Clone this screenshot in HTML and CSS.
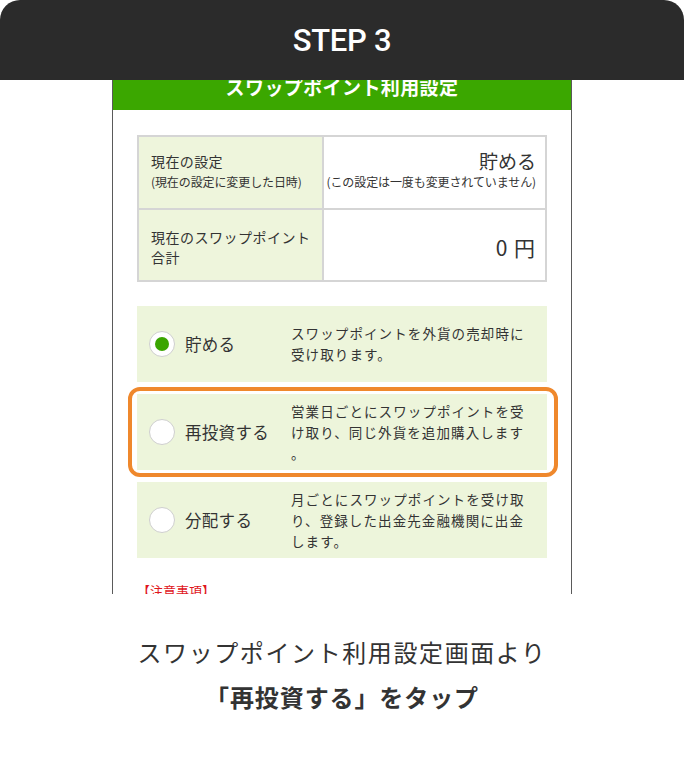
FILE: index.html
```html
<!DOCTYPE html>
<html lang="ja">
<head>
<meta charset="utf-8">
<title>STEP 3</title>
<link rel="stylesheet" href="styles.css">
</head>
<body>
<div class="page">
  <header class="step-header">
    <h1 class="step-title">STEP 3</h1>
  </header>

  <section class="screen">
    <div class="app-title"><span class="app-title-text">スワップポイント利用設定</span></div>
    <div class="screen-body">
      <div class="status-table">
        <div class="cell cell-label">
          <div class="label-main">現在の設定</div>
          <div class="label-sub">(現在の設定に変更した日時)</div>
        </div>
        <div class="cell cell-value">
          <div class="value-main">貯める</div>
          <div class="value-sub">(この設定は一度も変更されていません)</div>
        </div>
        <div class="cell cell-label">
          <div class="label-multi">現在のスワップポイント<br>合計</div>
        </div>
        <div class="cell cell-value">
          <div class="value-amount">0 円</div>
        </div>
      </div>

      <div class="options">
        <div class="option">
          <span class="radio radio-checked"></span>
          <span class="option-label">貯める</span>
          <span class="option-desc">スワップポイントを外貨の売却時に受け取ります。</span>
        </div>
        <div class="option option-highlight">
          <span class="radio"></span>
          <span class="option-label">再投資する</span>
          <span class="option-desc">営業日ごとにスワップポイントを受け取り、同じ外貨を追加購入します。</span>
          <span class="highlight-ring"></span>
        </div>
        <div class="option">
          <span class="radio"></span>
          <span class="option-label">分配する</span>
          <span class="option-desc">月ごとにスワップポイントを受け取り、登録した出金先金融機関に出金します。</span>
        </div>
      </div>

      <p class="notice">【注意事項】</p>
    </div>
  </section>

  <div class="caption">
    <p class="caption-line">スワップポイント利用設定画面より</p>
    <p class="caption-strong">「再投資する」をタップ</p>
  </div>
</div>
</body>
</html>
```

FILE: styles.css
```css
* {
  box-sizing: border-box;
}

html, body {
  margin: 0;
  padding: 0;
  background: #ffffff;
}

body {
  font-family: "Noto Sans CJK JP", "Noto Sans", sans-serif;
  color: #333333;
}

.page {
  width: 684px;
  height: 778px;
  overflow: hidden;
}

.step-header {
  height: 80px;
  background: #2b2b2b;
  border-radius: 20px 20px 0 0;
  display: flex;
  align-items: center;
  justify-content: center;
  position: relative;
  z-index: 2;
}

.step-title {
  margin: 0;
  font-family: Roboto, "DejaVu Sans", sans-serif;
  font-weight: 500;
  font-size: 31px;
  letter-spacing: -0.3px;
  color: #ffffff;
  line-height: 1;
  padding-top: 1px;
}

.screen {
  width: 460px;
  height: 514px;
  margin: 0 auto;
  border-left: 1px solid #5a5a5a;
  border-right: 1px solid #5a5a5a;
  overflow: hidden;
}

.app-title {
  height: 30px;
  background: #3ba700;
  overflow: hidden;
  text-align: center;
}

.app-title-text {
  display: block;
  margin-top: -5px;
  line-height: 24px;
  font-size: 19px;
  font-weight: 700;
  letter-spacing: 0.4px;
  color: #ffffff;
}

.screen-body {
  padding: 25px 24px 0 24px;
}

.status-table {
  display: grid;
  grid-template-columns: 183px 221px;
  grid-template-rows: 71px 70px;
  gap: 2px;
  padding: 2px;
  background: #d5d5d5;
}

.cell {
  display: flex;
  flex-direction: column;
  justify-content: center;
}

.cell-label {
  background: #eef5dc;
  padding-left: 12px;
}

.cell-value {
  background: #ffffff;
  align-items: flex-end;
  padding-right: 9px;
}

.label-main {
  font-size: 14px;
  line-height: 22px;
  letter-spacing: 0.4px;
  margin-top: -3px;
}

.label-sub {
  font-size: 12px;
  line-height: 20px;
  letter-spacing: -0.1px;
  white-space: nowrap;
}

.label-multi {
  font-size: 14px;
  line-height: 20px;
  letter-spacing: 0.5px;
  padding-top: 4px;
}

.value-main {
  font-size: 19px;
  line-height: 22px;
  margin-top: -3px;
}

.value-sub {
  font-size: 12px;
  line-height: 20px;
  letter-spacing: -0.1px;
  white-space: nowrap;
}

.value-amount {
  font-size: 21px;
  line-height: 24px;
  letter-spacing: 1px;
  padding-top: 4px;
}

.options {
  margin-top: 24px;
  display: flex;
  flex-direction: column;
  gap: 12px;
}

.option {
  position: relative;
  height: 76px;
  background: #edf5db;
  display: flex;
  align-items: center;
  padding: 0 12px;
}

.radio {
  flex: none;
  width: 26px;
  height: 26px;
  border-radius: 50%;
  border: 1.5px solid #cfcfcf;
  background: #ffffff;
  margin-right: 10px;
  display: flex;
  align-items: center;
  justify-content: center;
}

.radio-checked::after {
  content: "";
  width: 14px;
  height: 14px;
  border-radius: 50%;
  background: #3aa500;
}

.option-label {
  flex: none;
  width: 106px;
  font-size: 16.5px;
  letter-spacing: 0.3px;
  line-height: 24px;
  color: #333333;
}

.option-desc {
  flex: 1;
  font-size: 13.5px;
  letter-spacing: 1.1px;
  line-height: 21px;
  line-break: anywhere;
  word-break: break-all;
  color: #333333;
}

.highlight-ring {
  position: absolute;
  top: -7px;
  left: -9px;
  right: -11px;
  bottom: -7px;
  border: 4px solid #ef882c;
  border-radius: 12px;
  pointer-events: none;
}

.notice {
  margin: 23px 0 0 0;
  font-size: 13px;
  line-height: 20px;
  color: #e0161c;
}

.caption {
  margin-top: 36px;
  text-align: center;
}

.caption-line {
  margin: 0;
  font-size: 24px;
  line-height: 44px;
  letter-spacing: 1.6px;
  font-weight: 400;
  color: #333333;
}

.caption-strong {
  margin: 0;
  font-size: 24px;
  line-height: 46px;
  letter-spacing: 0.9px;
  font-weight: 700;
  color: #333333;
}
```
